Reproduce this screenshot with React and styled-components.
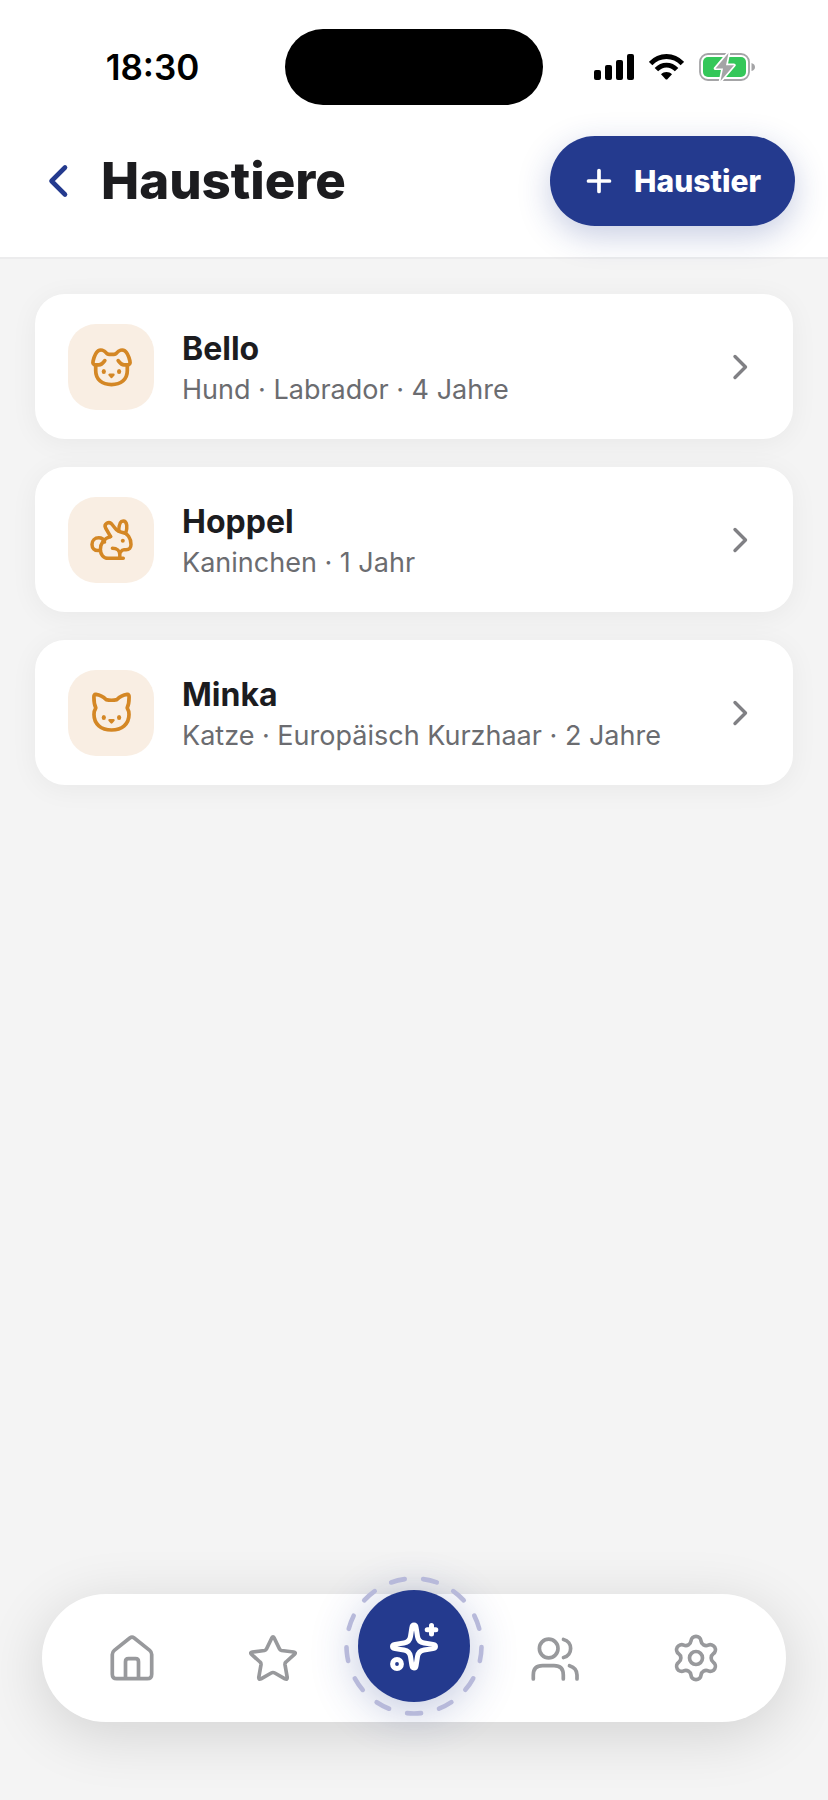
import React from 'react';
import styled, { createGlobalStyle } from 'styled-components';
import { Settings } from 'lucide-react';

const GlobalStyle = createGlobalStyle`
  * {
    box-sizing: border-box;
  }

  body {
    margin: 0;
    background: #f4f4f4;
    color: #1c1c1f;
    font-family: Inter, 'Liberation Sans', sans-serif;
  }

  button {
    font-family: inherit;
    border: none;
    padding: 0;
    cursor: pointer;
  }
`;

const Page = styled.div`
  min-height: 100vh;
  display: flex;
  flex-direction: column;
`;

const TopArea = styled.header`
  background: #fff;
  border-bottom: 2px solid #ececed;
`;

const StatusBar = styled.div`
  display: grid;
  grid-template-columns: 1fr 258px 1fr;
  align-items: center;
  padding-top: 29px;
`;

const Clock = styled.time`
  padding-left: 20px;
  text-align: center;
  font-size: 35px;
  line-height: 40px;
  font-weight: 600;
  color: #000;
`;

const Island = styled.div`
  height: 76px;
  border-radius: 38px;
  background: #000;
`;

const StatusIcons = styled.div`
  display: flex;
  align-items: center;
  justify-content: center;
  gap: 15px;
  padding-right: 22px;
`;

const TitleBar = styled.div`
  display: flex;
  align-items: center;
  padding: 31px 33px 31px 41px;
`;

const BackButton = styled.button`
  display: flex;
  background: none;
  color: #243a8e;
`;

const Title = styled.h1`
  flex: 1;
  margin: 0 0 0 26px;
  font-size: 51px;
  line-height: 64px;
  font-weight: 800;
`;

const AddButton = styled.button`
  display: flex;
  align-items: center;
  gap: 20px;
  height: 90px;
  padding: 0 34px;
  border-radius: 45px;
  background: #243a8e;
  color: #fff;
  font-size: 30px;
  font-weight: 800;
  box-shadow: 0 10px 32px rgba(36, 58, 142, 0.25);
`;

const PetList = styled.main`
  display: flex;
  flex-direction: column;
  gap: 28px;
  padding: 35px;
`;

const PetCard = styled.button`
  display: flex;
  align-items: center;
  width: 100%;
  height: 145px;
  padding: 0 33px;
  border-radius: 30px;
  background: #fff;
  color: inherit;
  text-align: left;
  box-shadow: 0 4px 28px rgba(0, 0, 0, 0.05);
`;

const PetTile = styled.span`
  display: flex;
  align-items: center;
  justify-content: center;
  width: 86px;
  height: 86px;
  margin-right: 28px;
  border-radius: 28px;
  background: #f9eee3;
  color: #d48725;
`;

const PetText = styled.span`
  flex: 1;
  display: flex;
  flex-direction: column;
  gap: 3px;
  padding-top: 4px;
`;

const PetName = styled.span`
  font-size: 32px;
  line-height: 40px;
  font-weight: 700;
`;

const PetInfo = styled.span`
  font-size: 27px;
  line-height: 36px;
  color: #6b6c70;
`;

const Chevron = styled.span`
  display: flex;
  color: #808084;
`;

const TabBar = styled.nav`
  display: grid;
  grid-template-columns: repeat(5, 1fr);
  grid-template-rows: 100%;
  align-items: center;
  height: 128px;
  margin: auto 42px 78px;
  padding: 0 20px;
  border-radius: 64px;
  background: #fff;
  box-shadow: 0 12px 60px rgba(0, 0, 0, 0.14);
`;

const Tab = styled.button`
  display: flex;
  align-items: center;
  justify-content: center;
  height: 100%;
  background: none;
  color: #98999c;
`;

const MagicTab = styled.button`
  position: relative;
  justify-self: center;
  display: flex;
  align-items: center;
  justify-content: center;
  width: 112px;
  height: 112px;
  margin-bottom: 24px;
  border-radius: 50%;
  background: #243a8e;
  color: #fff;
  box-shadow: 0 8px 48px rgba(36, 58, 142, 0.3);
`;

const DashRing = styled.svg`
  position: absolute;
  inset: -16px;
  color: #b7b9da;
`;

const Icon = ({ size = 48, stroke = 3.7, children }) => (
  <svg
    width={size}
    height={size}
    viewBox={`0 0 ${size} ${size}`}
    fill="none"
    stroke="currentColor"
    strokeWidth={stroke}
    strokeLinecap="round"
    strokeLinejoin="round"
    aria-hidden="true"
  >
    {children}
  </svg>
);

const Nose = ({ y }) => (
  <path
    d={`M22.5 ${y} h4 l-2 2.2 z`}
    fill="currentColor"
    strokeWidth="2.4"
  />
);

const Eyes = () => (
  <g fill="currentColor" stroke="none">
    <ellipse cx="16.8" cy="28.4" rx="2.1" ry="2.5" />
    <ellipse cx="32.1" cy="28.4" rx="2.1" ry="2.5" />
  </g>
);

const DogIcon = () => (
  <Icon>
    <path d="M17.8 17.6 C16 20 15 21.9 12 21.9 H8.6 C6.4 21.9 5.5 20.3 6.1 18 C7.3 13 8.8 9.6 11.3 7.8 C13.6 6.2 17 7.2 19.3 9.9 C20.2 10.9 20.8 11.3 22 11.3 H27 C28.2 11.3 28.8 10.9 29.7 9.9 C32 7.2 35.4 6.2 37.7 7.8 C40.2 9.6 41.7 13 42.9 18 C43.5 20.3 42.6 21.9 40.4 21.9 H37 C34 21.9 33 20 31.2 17.6" />
    <path d="M8.7 22.5 V27.5 C8.7 36.5 15 41.6 24.5 41.6 S40.3 36.5 40.3 27.5 V22.5" />
    <Eyes />
    <Nose y={31.8} />
  </Icon>
);

const RabbitIcon = () => (
  <Icon stroke={3.5}>
    <path d="M17.5 26 C16.5 23 14.5 21.8 11.8 21.8 C7.8 21.8 5 24.8 5 28.5 C5 32.2 7.5 34.6 11 34.6 H13.4" />
    <path d="M23.6 20.6 C17 22 13.4 27.5 13.4 33.5 C13.4 38.5 16.5 42.3 21 42.3 H36.3" />
    <path d="M25.4 32.3 C30 32.3 32.8 35 32.8 38.5 V42" />
    <path d="M32.8 37 C34.2 35.5 34.5 33.8 37 33.8 H39 C42.3 33.8 44 31.5 44 28.5 C44 22.5 41 17.2 34.5 16.2 C30 15.6 29.5 14.2 27.5 11.5 L24.7 8 C21.8 4.8 16.5 8 18.6 12 L23.6 20.6" />
    <path d="M31.8 15.3 C31.8 10 32.5 5 36.2 5 C40.5 5 40.5 12 38.7 17.3" />
    <circle cx="35.8" cy="24.8" r="2" fill="currentColor" stroke="none" />
  </Icon>
);

const CatIcon = () => (
  <Icon>
    <path d="M8.9 5.4 C12.7 5.9 16.2 7.6 19 10.6 C22.5 11.4 26.5 11.4 30 10.6 C32.8 7.6 36.3 5.9 40.1 5.4 C41.6 5.2 42.1 6.4 42.1 7.9 C42.1 12 41.8 15.5 40.2 18.9 C41.5 20.9 42 22.8 42 25.5 C42 35 35 41 24.5 41 S7 35 7 25.5 C7 22.8 7.5 20.9 8.8 18.9 C7.2 15.5 6.9 12 6.9 7.9 C6.9 6.4 7.4 5.2 8.9 5.4 Z" />
    <Eyes />
    <Nose y={31.2} />
  </Icon>
);

const HomeIcon = () => (
  <Icon>
    <path d="M4.3 20.5 C4.3 18.6 4.8 17.6 6.3 16.4 L21.8 4 Q24 2.4 26.2 4 L41.7 16.4 C43.2 17.6 43.7 18.6 43.7 20.5 V40.2 Q43.7 44.7 39.2 44.7 H8.8 Q4.3 44.7 4.3 40.2 Z" />
    <path d="M17.5 44 V27.7 Q17.5 24.7 20.5 24.7 H27.5 Q30.5 24.7 30.5 27.7 V44" />
  </Icon>
);

const StarIcon = () => (
  <Icon>
    <path d="M22.8 4 Q24 1.8 25.2 4 L30.4 14.8 Q31 16.2 32.5 16.5 L44.7 18 Q47.4 18.5 45.4 20.4 L37 28 Q35.8 29 36 30.7 L38.2 43.2 Q38.4 46 36 44.9 L25.8 39 Q24 38 22.2 39 L12 44.9 Q9.6 46 9.8 43.2 L12 30.7 Q12.2 29 11 28 L2.6 20.4 Q.6 18.5 3.3 18 L15.5 16.5 Q17 16.2 17.6 14.8 Z" />
  </Icon>
);

const PeopleIcon = () => (
  <Icon>
    <circle cx="17.7" cy="14.5" r="9.3" />
    <path d="M2.3 45 V41 Q2.3 31.7 11.6 31.7 H23 Q32.3 31.7 32.3 41 V45" />
    <path d="M32.5 5.5 C42 7.5 42 21.5 32.5 23.5" />
    <path d="M38.5 31.7 Q46 34 46 41 V45" />
  </Icon>
);

const SparkleIcon = () => (
  <Icon size={60} stroke={5}>
    <path d="M27.9 11.5 C28.4 8.2 31.6 8.2 32.1 11.5 L33.5 20.5 Q34.4 26.1 40 27 L49 28.4 C52.3 28.9 52.3 32.1 49 32.6 L40 34 Q34.4 34.9 33.5 40.5 L32.1 49.5 C31.6 52.8 28.4 52.8 27.9 49.5 L26.5 40.5 Q25.6 34.9 20 34 L11 32.6 C7.7 32.1 7.7 28.9 11 28.4 L20 27 Q25.6 26.1 26.5 20.5 Z" />
    <path d="M47.5 9.4 V18 M43.2 13.7 H51.8" />
    <circle cx="13" cy="48" r="4.4" />
  </Icon>
);

const SignalIcon = () => (
  <svg width="40" height="26" viewBox="0 0 40 26" aria-hidden="true">
    <rect x="0" y="16" width="7" height="10" rx="2" />
    <rect x="11" y="11" width="7" height="15" rx="2" />
    <rect x="22" y="6" width="7" height="20" rx="2" />
    <rect x="33" y="0" width="7" height="26" rx="2" />
  </svg>
);

const WifiIcon = () => (
  <svg width="35" height="26" viewBox="0 0 35 26" aria-hidden="true">
    <g fill="none" stroke="#000" strokeWidth="4.8">
      <path d="M1.6 9.6 C10.5 .1 24.5 .1 33.4 9.6" />
      <path d="M7.4 15.7 C13.2 9.6 21.8 9.6 27.6 15.7" />
    </g>
    <path d="M12 20.2 C15 17.2 20 17.2 23 20.2 L18.6 25 Q17.5 26 16.4 25 Z" />
  </svg>
);

const BatteryIcon = () => (
  <svg width="56" height="30" viewBox="0 0 56 30" aria-hidden="true">
    <rect x="1" y="2" width="49" height="26" rx="8" fill="none" stroke="#a4a4a6" strokeWidth="1.8" />
    <path d="M52.5 11 Q56 12 56 15 T52.5 19 Z" fill="#a4a4a6" />
    <rect x="4" y="5" width="43" height="20" rx="5" fill="#34c759" />
    <path
      d="M29.5 1 L16.5 16.4 H24 L21.5 29 L35 13.2 H27 Z"
      fill="#a4a4a6"
      stroke="#fff"
      strokeWidth="3.4"
      strokeLinejoin="round"
      paintOrder="stroke"
    />
  </svg>
);

const pets = [
  { name: 'Bello', info: 'Hund · Labrador · 4 Jahre', icon: DogIcon },
  { name: 'Hoppel', info: 'Kaninchen · 1 Jahr', icon: RabbitIcon },
  { name: 'Minka', info: 'Katze · Europäisch Kurzhaar · 2 Jahre', icon: CatIcon },
];

const App = () => (
  <>
    <GlobalStyle />
    <Page>
      <TopArea>
        <StatusBar>
          <Clock>18:30</Clock>
          <Island />
          <StatusIcons>
            <SignalIcon />
            <WifiIcon />
            <BatteryIcon />
          </StatusIcons>
        </StatusBar>

        <TitleBar>
          <BackButton type="button" aria-label="Zurück">
            <Icon size={34} stroke={4.6}>
              <path d="M24 3.5 L10.5 17 L24 30.5" />
            </Icon>
          </BackButton>
          <Title>Haustiere</Title>
          <AddButton type="button">
            <Icon size={30}>
              <path d="M15 4.5 V25.5 M4.5 15 H25.5" />
            </Icon>
            Haustier
          </AddButton>
        </TitleBar>
      </TopArea>

      <PetList>
        {pets.map(({ name, info, icon: PetIcon }) => (
          <PetCard key={name} type="button">
            <PetTile>
              <PetIcon />
            </PetTile>
            <PetText>
              <PetName>{name}</PetName>
              <PetInfo>{info}</PetInfo>
            </PetText>
            <Chevron>
              <Icon size={40} stroke={3.4}>
                <path d="M15 9.5 L25.5 20 L15 30.5" />
              </Icon>
            </Chevron>
          </PetCard>
        ))}
      </PetList>

      <TabBar>
        <Tab type="button" aria-label="Start">
          <HomeIcon />
        </Tab>
        <Tab type="button" aria-label="Favoriten">
          <StarIcon />
        </Tab>
        <MagicTab type="button" aria-label="Assistent">
          <DashRing width="144" height="144" viewBox="0 0 144 144" fill="none" aria-hidden="true">
            <circle
              cx="72"
              cy="72"
              r="67.5"
              pathLength="13"
              stroke="currentColor"
              strokeWidth="4.6"
              strokeLinecap="round"
              strokeDasharray=".43 .57"
              transform="rotate(84 72 72)"
            />
          </DashRing>
          <SparkleIcon />
        </MagicTab>
        <Tab type="button" aria-label="Familie">
          <PeopleIcon />
        </Tab>
        <Tab type="button" aria-label="Einstellungen">
          <Settings size={52} strokeWidth={1.7} />
        </Tab>
      </TabBar>
    </Page>
  </>
);

export default App;
